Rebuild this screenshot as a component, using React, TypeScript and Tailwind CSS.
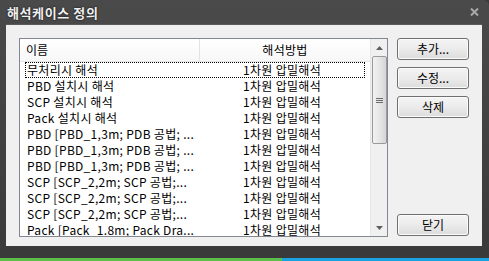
import React from "react";

const rows: [string, string][] = [
  ["무처리시 해석", "1차원 압밀해석"],
  ["PBD 설치시 해석", "1차원 압밀해석"],
  ["SCP 설치시 해석", "1차원 압밀해석"],
  ["Pack 설치시 해석", "1차원 압밀해석"],
  ["PBD [PBD_1,3m; PDB 공법; ...", "1차원 압밀해석"],
  ["PBD [PBD_1,3m; PDB 공법; ...", "1차원 압밀해석"],
  ["PBD [PBD_1,3m; PDB 공법; ...", "1차원 압밀해석"],
  ["SCP [SCP_2,2m; SCP 공법;...", "1차원 압밀해석"],
  ["SCP [SCP_2,2m; SCP 공법;...", "1차원 압밀해석"],
  ["SCP [SCP_2,2m; SCP 공법;...", "1차원 압밀해석"],
  ["Pack [Pack_1.8m; Pack Dra...", "1차원 압밀해석"],
];

const font = { fontFamily: '"Noto Sans CJK KR", "Noto Sans", sans-serif' };

function Btn({ label }: { label: string }) {
  return (
    <button className="w-[72px] h-[22px] rounded-[3px] border border-[#707070] bg-gradient-to-b from-[#f4f4f4] via-[#ebebeb] to-[#dcdcdc] text-[12px] leading-none text-black flex items-center justify-center shadow-[inset_0_0_0_1px_#fbfbfb]">
      {label}
    </button>
  );
}

export default function App() {
  return (
    <div className="w-[489px] h-[261px] flex flex-col bg-[#3c3c3c] overflow-hidden" style={font}>
      <div className="h-[258px] flex flex-col bg-gradient-to-b from-[#4a4a4a] to-[#3a3a3a] rounded-tr-[6px]">
        {/* title bar */}
        <div className="h-[24px] flex items-center justify-between pl-[7px] pr-[10px] shrink-0">
          <span className="text-[13px] font-bold text-[#f0f0f0] leading-none tracking-[0.6px]" style={{ textShadow: "0 0 2px #000" }}>
            해석케이스 정의
          </span>
          <svg width="9" height="8" viewBox="0 0 9 8">
            <path d="M1 0.5 L8 7.5 M8 0.5 L1 7.5" stroke="#a8a8a8" strokeWidth="2" />
          </svg>
        </div>
        {/* client area */}
        <div className="flex-1 ml-[6px] mr-[7px] mb-[12px] bg-[#f0f0f0] border-t border-[#5a5a5a] flex pl-[13px] pt-[13px] pb-[9px] pr-[13px] gap-[9px]">
          {/* listbox */}
          <div className="w-[369px] h-[199px] border border-[#828790] bg-white flex overflow-hidden">
            <div className="flex-1 flex flex-col overflow-hidden">
              <div className="h-[23px] shrink-0 flex text-[12px] text-black border-b border-[#e5e5e5] bg-gradient-to-b from-white to-[#f7f7f7]">
                <div className="w-[180px] border-r border-[#e3e3e3] flex items-center pl-[6px]">이름</div>
                <div className="flex-1 flex items-center justify-center tracking-[0.3px]">해석방법</div>
              </div>
              <div className="flex flex-col">
                {rows.map((r, i) => (
                  <div
                    key={i}
                    className={`h-[16px] shrink-0 ml-[5px] mr-[5px] flex items-center text-[12px] text-black whitespace-nowrap border ${
                      i === 0 ? "border-dotted border-black" : "border-transparent"
                    }`}
                  >
                    <div className="w-[174px] pl-[1px] overflow-hidden tracking-[0.3px]">{r[0]}</div>
                    <div className="flex-1 flex justify-center tracking-[0.3px]">{r[1]}</div>
                  </div>
                ))}
              </div>
            </div>
            {/* scrollbar */}
            <div className="w-[17px] shrink-0 bg-[#f0f0f0] border-l border-[#e6e6e6] flex flex-col items-center">
              <div className="h-[17px] w-full flex items-center justify-center">
                <svg width="7" height="4" viewBox="0 0 7 4">
                  <path d="M3.5 0 L7 4 L0 4 Z" fill="#606060" />
                </svg>
              </div>
              <div className="w-[15px] h-[88px] rounded-[2px] border border-[#9a9a9a] bg-gradient-to-r from-[#f2f2f2] via-[#e6e6e6] to-[#d6d6d6] flex flex-col items-center justify-center gap-[1px]">
                <div className="w-[7px] h-[1px] bg-[#6a6a6a]" />
                <div className="w-[7px] h-[1px] bg-[#6a6a6a]" />
                <div className="w-[7px] h-[1px] bg-[#6a6a6a]" />
              </div>
              <div className="flex-1" />
              <div className="h-[17px] w-full flex items-center justify-center">
                <svg width="7" height="4" viewBox="0 0 7 4">
                  <path d="M0 0 L7 0 L3.5 4 Z" fill="#606060" />
                </svg>
              </div>
            </div>
          </div>
          {/* buttons */}
          <div className="flex flex-col w-[72px]">
            <div className="flex flex-col gap-[7px]">
              <Btn label="추가..." />
              <Btn label="수정..." />
              <Btn label="삭제" />
            </div>
            <div className="flex-1" />
            <div className="mb-[1px]">
              <Btn label="닫기" />
            </div>
          </div>
        </div>
      </div>
      <div className="h-[3px] flex">
        <div className="w-[282px] bg-[#5cbf4a]" />
        <div className="flex-1 bg-[#1aa3e0]" />
      </div>
    </div>
  );
}
